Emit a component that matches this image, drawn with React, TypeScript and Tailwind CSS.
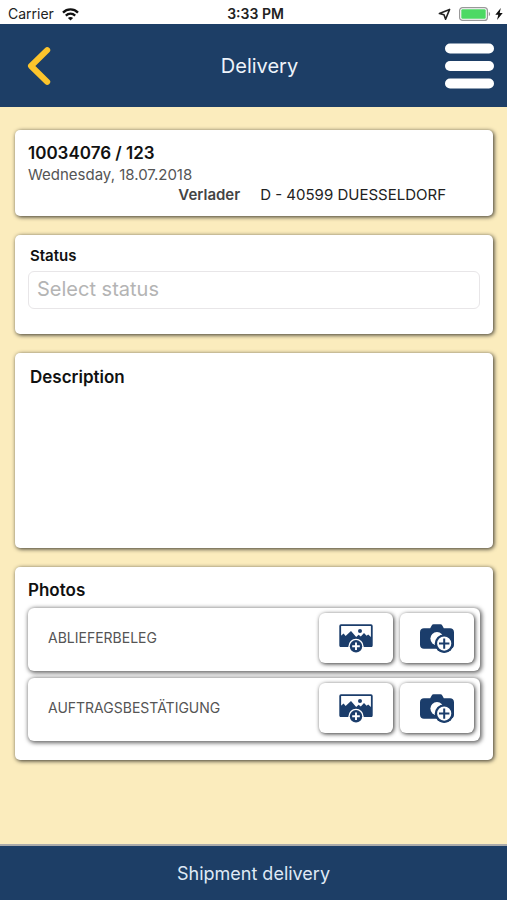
import type { ReactNode } from 'react';

const photoTypes = ['ABLIEFERBELEG', 'AUFTRAGSBESTÄTIGUNG'];

function StatusBar() {
  return (
    <div className="grid h-6 grid-cols-3 items-center bg-white pt-1 pr-1 pl-2 text-[14px] leading-5 text-[#222]">
      <div className="flex items-center gap-2">
        <span>Carrier</span>
        <svg width="17" height="13" viewBox="0 0 17 13" fill="none" stroke="#111" strokeWidth="2.3" aria-hidden="true">
          <path d="M1 4.6C5.2.4 11.8.4 16 4.6" />
          <path d="M3.8 7.6c2.7-2.6 6.7-2.6 9.4 0" />
          <path d="M8.5 12.6 5.9 9.9c1.5-1.3 3.7-1.3 5.2 0z" fill="#111" stroke="none" />
        </svg>
      </div>
      <span className="text-center font-semibold">3:33 PM</span>
      <div className="flex items-center justify-end gap-1">
        <svg className="mr-1" width="13" height="13" viewBox="0 0 13 13" fill="none" stroke="#222" strokeWidth="1.6" strokeLinejoin="round" aria-hidden="true">
          <path d="M11.6 1.4 1.4 5.6l4.6 1.2 1.6 4.4z" />
        </svg>
        <svg width="32" height="14" viewBox="0 0 32 14" aria-hidden="true">
          <rect x=".6" y=".6" width="27.8" height="12.8" rx="3" fill="#fff" stroke="#999" strokeWidth="1.2" />
          <rect x="2.3" y="2.3" width="24.4" height="9.4" rx="1.2" fill="#4cd964" />
          <path d="M29.8 4.8c1.8.7 1.8 3.7 0 4.4z" fill="#999" />
        </svg>
        <svg width="8" height="12" viewBox="0 0 8 12" fill="#111" aria-hidden="true">
          <path d="M5.8 0 .3 6.8h3L2 12l5.7-7h-3z" />
        </svg>
      </div>
    </div>
  );
}

function Header() {
  return (
    <header className="grid h-[83px] grid-cols-3 items-center bg-[#1d3e66] pr-3 pl-6">
      <button type="button" aria-label="Back" className="justify-self-start">
        <svg width="30" height="40" viewBox="0 0 30 40" fill="none" stroke="#fcc42c" strokeWidth="6" strokeLinecap="round" strokeLinejoin="round">
          <path d="M23.2 4.2 7 20l16.2 15.8" />
        </svg>
      </button>
      <h1 className="text-center text-[20px] leading-6 text-[#eef3fa]">Delivery</h1>
      <button type="button" aria-label="Menu" className="justify-self-end">
        <svg width="50" height="46" viewBox="0 0 50 46" fill="#fff">
          <rect x="0" y=".5" width="49" height="10" rx="5" />
          <rect x="0" y="18" width="49" height="10" rx="5" />
          <rect x="0" y="35.5" width="49" height="10" rx="5" />
        </svg>
      </button>
    </header>
  );
}

function Card({ className, children }: { className: string; children: ReactNode }) {
  return (
    <section className={`rounded-[5px] bg-white px-[13px] shadow-[1px_1px_4px_rgba(0,0,0,0.8)] ${className}`}>
      {children}
    </section>
  );
}

function ImageAddIcon() {
  return (
    <svg width="34" height="29" viewBox="0 0 34 29" aria-hidden="true">
      <rect x="1.2" y="1.2" width="31.6" height="21" rx=".8" fill="#fff" stroke="#1b3d6b" strokeWidth="1.8" />
      <path d="M1 12.6 4.6 9.4l2 2.6L12 7l5.2 6 2.4-2.2 2.2 1.6 3.2-3.4 2.6 2.8 1.6-1.2 3.8 3.4V23H1z" fill="#1b3d6b" />
      <circle cx="21" cy="7" r="2" fill="#1b3d6b" />
      <circle cx="17" cy="22.3" r="7.6" fill="#fff" />
      <circle cx="17" cy="22.3" r="6.2" fill="#1b3d6b" />
      <path d="M17 18.5v7.6M13.2 22.3h7.6" stroke="#fff" strokeWidth="1.9" />
    </svg>
  );
}

function CameraAddIcon() {
  return (
    <svg width="34" height="29" viewBox="0 0 34 29" aria-hidden="true">
      <path d="M4 4.2h6.2l1.5-2.8C12.1.6 12.7.2 13.6.2h6.8c.9 0 1.5.4 1.9 1.2l1.5 2.8H30c2.4 0 4 1.6 4 4v12.6c0 2.4-1.6 4-4 4H4c-2.4 0-4-1.6-4-4V8.2c0-2.4 1.6-4 4-4z" fill="#1b3d6b" />
      <circle cx="17" cy="14.6" r="6.6" fill="#fff" />
      <circle cx="24.2" cy="19.6" r="9.4" fill="#1b3d6b" />
      <circle cx="24.2" cy="19.6" r="8" fill="#fff" stroke="#1b3d6b" strokeWidth="1.8" />
      <path d="M24.2 14.4v10.4M19 19.6h10.4" stroke="#1b3d6b" strokeWidth="2" />
    </svg>
  );
}

function PhotoButton({ label, children }: { label: string; children: ReactNode }) {
  return (
    <button
      type="button"
      aria-label={label}
      className="flex h-[50px] w-[74px] items-center justify-center rounded-md bg-white shadow-[1px_1px_4px_rgba(0,0,0,0.8)]"
    >
      {children}
    </button>
  );
}

export default function App() {
  return (
    <div className="flex min-h-screen flex-col bg-[#fbecbd] font-['Inter','Liberation_Sans',sans-serif] text-[#111]">
      <StatusBar />
      <Header />

      <main className="flex flex-1 flex-col gap-[19px] pt-[23px] pr-[14px] pb-5 pl-[15px]">
        <Card className="pt-[11px] pb-[11px]">
          <h2 className="text-[17px] leading-6 font-semibold">10034076 / 123</h2>
          <p className="text-[15px] leading-5 text-[#555]">Wednesday, 18.07.2018</p>
          <div className="flex justify-end gap-5 pr-[34px] text-[15px] leading-5">
            <span className="font-semibold text-[#444]">Verlader</span>
            <span className="text-[#222]">D - 40599 DUESSELDORF</span>
          </div>
        </Card>

        <Card className="pt-[11px] pb-[25px]">
          <label htmlFor="status" className="block px-[2px] pb-[5px] text-[15px] leading-5 font-semibold">
            Status
          </label>
          <select
            id="status"
            defaultValue=""
            className="block h-[38px] w-full appearance-none rounded-md border border-[#e8e6e8] bg-white px-2 pb-[2px] text-[20px] leading-6 text-[#b4b4b4]"
          >
            <option value="">Select status</option>
          </select>
        </Card>

        <Card className="pt-3 pb-3">
          <label htmlFor="description" className="block px-[2px] text-[17px] leading-6 font-semibold">
            Description
          </label>
          <textarea id="description" className="block h-[147px] w-full resize-none px-[2px] text-[17px] outline-none" />
        </Card>

        <Card className="pt-[11px] pb-[19px]">
          <h2 className="pb-[6px] text-[17px] leading-6 font-semibold">Photos</h2>
          <ul className="flex flex-col gap-[7px]">
            {photoTypes.map((type) => (
              <li
                key={type}
                className="flex h-[63px] items-center gap-[7px] rounded-md bg-white pr-[6px] pb-[3px] pl-5 shadow-[1px_1px_4px_1px_rgba(0,0,0,0.6)]"
              >
                <span className="flex-1 text-[14px] leading-5 text-[#555]">{type}</span>
                <PhotoButton label={`Choose image for ${type}`}>
                  <ImageAddIcon />
                </PhotoButton>
                <PhotoButton label={`Take photo for ${type}`}>
                  <CameraAddIcon />
                </PhotoButton>
              </li>
            ))}
          </ul>
        </Card>
      </main>

      <button type="button" className="h-14 w-full border-t-2 border-[#aaa] bg-[#1d3e66] pt-[2px] text-[18px] leading-6 text-[#dfe9f5]">
        Shipment delivery
      </button>
    </div>
  );
}
